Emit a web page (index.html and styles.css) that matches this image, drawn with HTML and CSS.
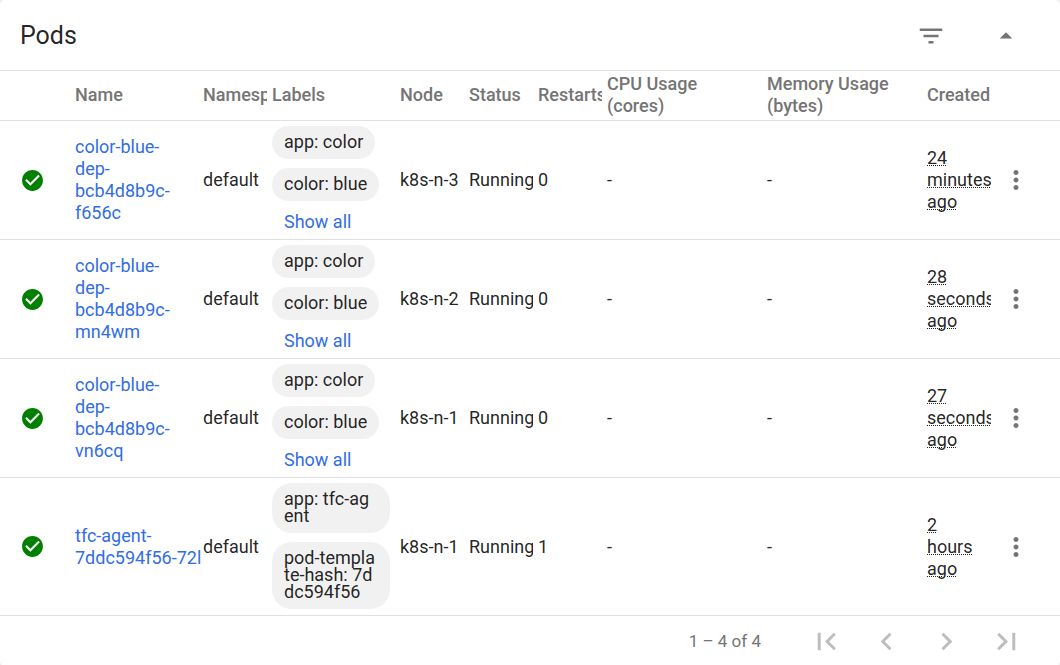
FILE: index.html
```html
<!DOCTYPE html>
<html lang="en">
<head>
    <meta charset="UTF-8">
    <meta name="viewport" content="width=device-width, initial-scale=1.0">
    <title>Pods</title>
    <link rel="stylesheet" href="styles.css">
</head>
<body>
<!-- Shared icons -->
<svg class="sprite" aria-hidden="true">
    <symbol id="icon-check" viewBox="0 0 24 24">
        <path d="M12 2C6.48 2 2 6.48 2 12s4.48 10 10 10 10-4.48 10-10S17.52 2 12 2zm-2 15l-5-5 1.41-1.41L10 14.17l7.59-7.59L19 8l-9 9z"/>
    </symbol>
    <symbol id="icon-more" viewBox="0 0 24 24">
        <path d="M12 8c1.1 0 2-.9 2-2s-.9-2-2-2-2 .9-2 2 .9 2 2 2zm0 2c-1.1 0-2 .9-2 2s.9 2 2 2 2-.9 2-2-.9-2-2-2zm0 6c-1.1 0-2 .9-2 2s.9 2 2 2 2-.9 2-2-.9-2-2-2z"/>
    </symbol>
</svg>

<main class="card">
    <header class="card-header">
        <h1>Pods</h1>
        <div class="card-actions">
            <button type="button" class="icon-button" aria-label="Filter">
                <svg class="icon" viewBox="0 0 24 24"><path d="M10 18h4v-2h-4v2zM3 6v2h18V6H3zm3 7h12v-2H6v2z"/></svg>
            </button>
            <button type="button" class="icon-button" aria-label="Collapse">
                <svg class="icon" viewBox="0 0 24 24"><path d="M7 14l5-5 5 5z"/></svg>
            </button>
        </div>
    </header>

    <table class="pods">
        <colgroup>
            <col class="col-status">
            <col class="col-wide">
            <col class="col-narrow">
            <col class="col-wide">
            <col class="col-narrow">
            <col class="col-narrow">
            <col class="col-narrow">
            <col class="col-usage">
            <col class="col-usage">
            <col class="col-narrow">
            <col class="col-menu">
        </colgroup>
        <thead>
        <tr>
            <th></th>
            <th><div class="cell">Name</div></th>
            <th><div class="cell">Namespace</div></th>
            <th><div class="cell">Labels</div></th>
            <th><div class="cell">Node</div></th>
            <th><div class="cell">Status</div></th>
            <th><div class="cell">Restarts</div></th>
            <th><div class="cell">CPU Usage<br>(cores)</div></th>
            <th><div class="cell">Memory Usage<br>(bytes)</div></th>
            <th><div class="cell">Created</div></th>
            <th></th>
        </tr>
        </thead>
        <tbody>
        <tr>
            <td class="status"><svg class="icon-status"><use href="#icon-check"/></svg></td>
            <td><div class="cell name"><a href="#">color-blue-dep-bcb4d8b9c-f656c</a></div></td>
            <td><div class="cell">default</div></td>
            <td>
                <div class="labels">
                    <span class="chip">app: color</span>
                    <span class="chip">color: blue</span>
                    <a href="#" class="show-all">Show all</a>
                </div>
            </td>
            <td><div class="cell">k8s-n-3</div></td>
            <td><div class="cell">Running</div></td>
            <td><div class="cell">0</div></td>
            <td><div class="cell">-</div></td>
            <td><div class="cell">-</div></td>
            <td><div class="cell age"><span>24 minutes ago</span></div></td>
            <td><button type="button" class="menu-button" aria-label="Actions"><svg class="icon"><use href="#icon-more"/></svg></button></td>
        </tr>
        <tr>
            <td class="status"><svg class="icon-status"><use href="#icon-check"/></svg></td>
            <td><div class="cell name"><a href="#">color-blue-dep-bcb4d8b9c-mn4wm</a></div></td>
            <td><div class="cell">default</div></td>
            <td>
                <div class="labels">
                    <span class="chip">app: color</span>
                    <span class="chip">color: blue</span>
                    <a href="#" class="show-all">Show all</a>
                </div>
            </td>
            <td><div class="cell">k8s-n-2</div></td>
            <td><div class="cell">Running</div></td>
            <td><div class="cell">0</div></td>
            <td><div class="cell">-</div></td>
            <td><div class="cell">-</div></td>
            <td><div class="cell age"><span>28 seconds ago</span></div></td>
            <td><button type="button" class="menu-button" aria-label="Actions"><svg class="icon"><use href="#icon-more"/></svg></button></td>
        </tr>
        <tr>
            <td class="status"><svg class="icon-status"><use href="#icon-check"/></svg></td>
            <td><div class="cell name"><a href="#">color-blue-dep-bcb4d8b9c-vn6cq</a></div></td>
            <td><div class="cell">default</div></td>
            <td>
                <div class="labels">
                    <span class="chip">app: color</span>
                    <span class="chip">color: blue</span>
                    <a href="#" class="show-all">Show all</a>
                </div>
            </td>
            <td><div class="cell">k8s-n-1</div></td>
            <td><div class="cell">Running</div></td>
            <td><div class="cell">0</div></td>
            <td><div class="cell">-</div></td>
            <td><div class="cell">-</div></td>
            <td><div class="cell age"><span>27 seconds ago</span></div></td>
            <td><button type="button" class="menu-button" aria-label="Actions"><svg class="icon"><use href="#icon-more"/></svg></button></td>
        </tr>
        <tr>
            <td class="status"><svg class="icon-status"><use href="#icon-check"/></svg></td>
            <td><div class="cell name"><a href="#">tfc-agent-<span class="hash">7ddc594f56-72l</span></a></div></td>
            <td><div class="cell">default</div></td>
            <td>
                <div class="labels">
                    <span class="chip">app: tfc-agent</span>
                    <span class="chip">pod-template-hash: 7ddc594f56</span>
                </div>
            </td>
            <td><div class="cell">k8s-n-1</div></td>
            <td><div class="cell">Running</div></td>
            <td><div class="cell">1</div></td>
            <td><div class="cell">-</div></td>
            <td><div class="cell">-</div></td>
            <td><div class="cell age"><span>2 hours ago</span></div></td>
            <td><button type="button" class="menu-button" aria-label="Actions"><svg class="icon"><use href="#icon-more"/></svg></button></td>
        </tr>
        </tbody>
    </table>

    <footer class="paginator">
        <span class="range">1 – 4 of 4</span>
        <button type="button" class="page-button" aria-label="First page" disabled>
            <svg viewBox="0 0 24 24"><path d="M18.41 16.59L13.82 12l4.59-4.59L17 6l-6 6 6 6zM6 6h2v12H6z"/></svg>
        </button>
        <button type="button" class="page-button" aria-label="Previous page" disabled>
            <svg viewBox="0 0 24 24"><path d="M15.41 7.41L14 6l-6 6 6 6 1.41-1.41L10.83 12z"/></svg>
        </button>
        <button type="button" class="page-button" aria-label="Next page" disabled>
            <svg viewBox="0 0 24 24"><path d="M10 6L8.59 7.41 13.17 12l-4.58 4.59L10 18l6-6z"/></svg>
        </button>
        <button type="button" class="page-button" aria-label="Last page" disabled>
            <svg viewBox="0 0 24 24"><path d="M5.59 7.41L10.18 12l-4.59 4.59L7 18l6-6-6-6zM16 6h2v12h-2z"/></svg>
        </button>
    </footer>
</main>
</body>
</html>
```

FILE: styles.css
```css
* {
    box-sizing: border-box;
}

body {
    margin: 0;
    background-color: #eee;
    color: rgba(0, 0, 0, 0.87);
    font-family: Roboto, "Liberation Sans", sans-serif;
    font-size: 18px;
    line-height: 22px;
}

a {
    color: #326de6;
    text-decoration: none;
}

button {
    display: flex;
    align-items: center;
    justify-content: center;
    padding: 0;
    border: none;
    background: none;
    color: #757575;
    cursor: pointer;
}

svg {
    display: block;
    fill: currentColor;
}

.sprite {
    display: none;
}

.icon {
    width: 30px;
    height: 30px;
}

.card {
    background-color: #fff;
    border-radius: 5px;
}

.card-header {
    display: flex;
    align-items: center;
    justify-content: space-between;
    padding: 11px 29px 9px 20px;
    border-bottom: 1px solid #e0e0e0;
}

h1 {
    margin: 0;
    font-size: 25px;
    font-weight: 400;
    line-height: 30px;
}

.card-actions {
    display: flex;
    gap: 25px;
}

.icon-button {
    width: 50px;
    height: 50px;
}

/* Table */
.pods {
    width: 100%;
    table-layout: fixed;
    border-collapse: separate;
    border-spacing: 0;
}

.col-status {
    width: 75px;
}

.col-wide {
    width: 128px;
}

.col-narrow {
    width: 69px;
}

.col-usage {
    width: 160px;
}

.col-menu {
    width: 64px;
}

th, td {
    padding: 0;
    border-bottom: 1px solid #e0e0e0;
    text-align: left;
    vertical-align: middle;
}

th {
    height: 50px;
    padding-bottom: 2px;
    color: #757575;
    font-weight: 500;
}

.cell {
    margin-right: 5px;
    overflow: hidden;
}

.name, .age {
    padding-right: 10px;
}

.name {
    margin-right: 2px;
}

.hash {
    white-space: nowrap;
}

.status {
    padding-left: 20px;
    color: #008000;
}

.icon-status {
    width: 25px;
    height: 25px;
}

.labels {
    display: flex;
    flex-direction: column;
    align-items: flex-start;
    gap: 9px;
    padding: 5px 10px 6px 0;
}

.chip {
    padding: 7px 12px 9px;
    border-radius: 20px;
    background-color: #f1f1f1;
    line-height: 17px;
    word-break: break-all;
}

.show-all {
    margin-left: 12px;
    line-height: 23px;
}

.age span {
    text-decoration: underline dotted 1px;
}

.menu-button {
    width: 40px;
    height: 50px;
}

/* Paginator */
.paginator {
    display: flex;
    align-items: center;
    justify-content: flex-end;
    padding-right: 24px;
    color: #757575;
    font-size: 17px;
}

.range {
    margin-right: 35px;
}

.page-button {
    width: 60px;
    height: 50px;
    color: #bdbdbd;
}

.page-button svg {
    width: 35px;
    height: 35px;
}
```
